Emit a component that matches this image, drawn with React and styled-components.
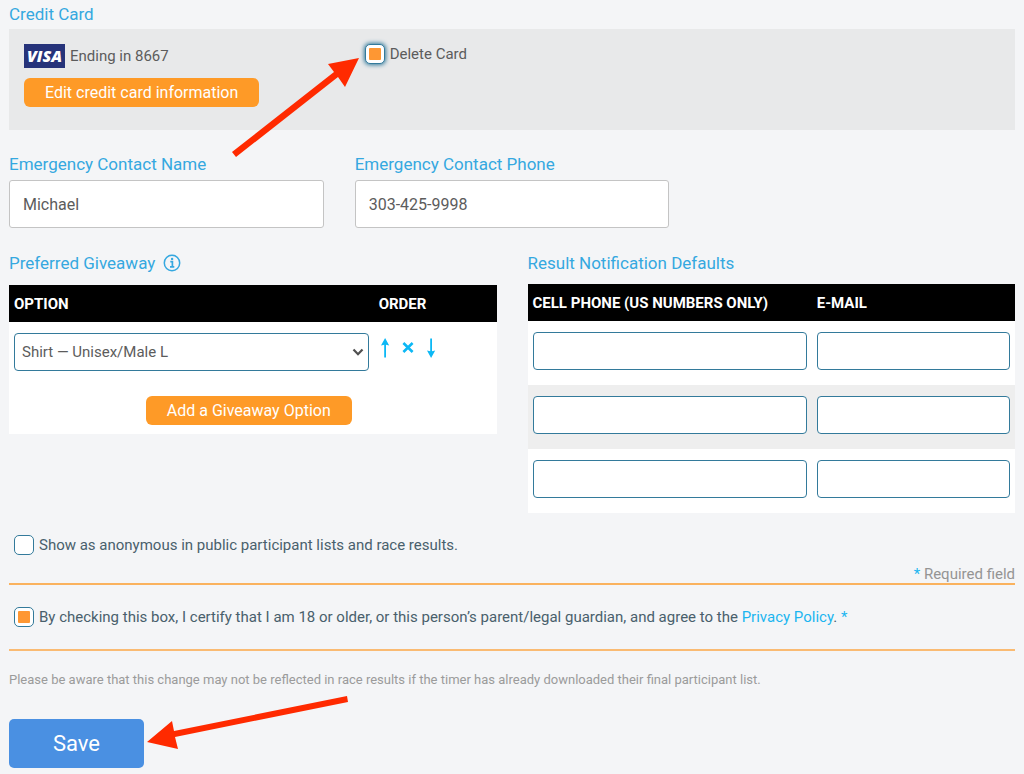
import React, { useState } from "react"
import styled, { createGlobalStyle, css } from "styled-components"

const GlobalStyle = createGlobalStyle`
    * {
        box-sizing: border-box;
    }
    body {
        margin: 0;
        background: #f4f5f7;
        font-family: Roboto, "Liberation Sans", sans-serif;
        font-size: 15px;
        line-height: 20px;
        color: #5c5c5c;
    }
    input, select, button {
        font-family: inherit;
        color: inherit;
    }
`

const Page = styled.form`
    padding: 4px 9px 6px;
`

const labelStyle = css`
    display: flex;
    align-items: center;
    gap: 8px;
    margin: 0;
    font-size: 17px;
    font-weight: 400;
    line-height: 20px;
    color: #35a8e0;
`

const Title = styled.h2`
    ${labelStyle}
    margin-bottom: ${p => p.$gap || 5}px;
`

const FieldLabel = styled.label`
    ${labelStyle}
    margin-bottom: 6px;
`

const Columns = styled.div`
    display: grid;
    grid-template-columns: repeat(${p => p.$count}, minmax(0, 1fr));
    column-gap: 31px;
    align-items: start;
    margin-top: ${p => p.$top || 0}px;
`

const CardPanel = styled.section`
    padding: 15px 15px 23px;
    background: #e8e9ea;
`

const CardLine = styled.div`
    display: flex;
    align-items: center;
    gap: 5px;
    margin-bottom: 10px;
`

const Visa = styled.span`
    width: 41px;
    height: 24px;
    background: #26337a;
    color: #fff;
    font-family: "Open Sans", sans-serif;
    font-size: 16px;
    font-weight: 800;
    font-style: italic;
    line-height: 24px;
    text-align: center;
`

const OrangeButton = styled.button`
    height: 29px;
    padding: 0 21px;
    border: 0;
    border-radius: 6px;
    background: #fe9a27;
    color: #fff;
    font-size: 16px;
    line-height: 29px;
    cursor: pointer;
`

const SaveButton = styled.button`
    width: 135px;
    height: 49px;
    border: 0;
    border-radius: 5px;
    background: #4a90e2;
    color: #fff;
    font-size: 22px;
    cursor: pointer;
`

const CheckLabel = styled.label`
    position: relative;
    display: inline-flex;
    align-items: center;
    gap: 5px;
    margin-left: 5px;
    color: ${p => p.$color || "#49606c"};
    a {
        color: #1cb5f0;
        text-decoration: none;
    }
`

const CheckBox = styled.input`
    appearance: none;
    display: grid;
    place-items: center;
    flex: none;
    width: 20px;
    height: 20px;
    margin: 0;
    border: 1px solid #337a9b;
    border-radius: 5px;
    background: #fff;
    box-shadow: ${p => (p.$glow ? "0 0 4px 1px #337a9b" : "none")};
    &:checked::before {
        content: "";
        width: 12px;
        height: 12px;
        border-radius: 1px;
        background: #fe9733;
    }
`

const TextInput = styled.input`
    display: block;
    width: 100%;
    height: 48px;
    padding: 0 13px;
    border: 1px solid #c4c4c4;
    border-radius: 3px;
    background: #fff;
    font-size: 16px;
`

const CellInput = styled.input`
    display: block;
    width: 100%;
    height: 38px;
    padding: 0 7px;
    border: 1px solid #337a9b;
    border-radius: 4px;
    background: #fff;
    font-size: 15px;
`

const SelectBox = styled.div`
    position: relative;
    select {
        appearance: none;
        display: block;
        width: 100%;
        height: 38px;
        padding: 0 24px 0 7px;
        border: 1px solid #337a9b;
        border-radius: 4px;
        background: #fff;
        font-size: 15px;
    }
    svg {
        position: absolute;
        right: 5px;
        top: 15px;
        pointer-events: none;
    }
`

const Table = styled.table`
    width: 100%;
    border-collapse: collapse;
    table-layout: fixed;
    background: #fff;
    th {
        height: 37px;
        padding: 0 5px;
        background: #000;
        color: #fff;
        font-size: 15px;
        font-weight: 700;
        text-align: left;
    }
    th:first-child {
        width: ${p => p.$first};
    }
    td {
        padding: 11px 5px 15px;
        vertical-align: top;
    }
    tbody tr:nth-child(even) td {
        background: ${p => (p.$striped ? "#eee" : "#fff")};
    }
    td.add {
        padding: 10px 13px 9px 5px;
        text-align: center;
    }
`

const OrderButtons = styled.div`
    display: flex;
    gap: 11px;
    padding-top: 4px;
    button {
        display: block;
        width: 12px;
        height: 22px;
        padding: 0;
        border: 0;
        background: none;
        color: #0cb8f5;
        cursor: pointer;
    }
    svg {
        display: block;
    }
`

const Required = styled.p`
    margin: 10px 0 0;
    font-size: 15px;
    line-height: 18px;
    text-align: right;
    color: #949494;
`

const Star = styled.span`
    color: #1cb5f0;
`

const Certify = styled.div`
    padding: 22px 0;
    border-top: 2px solid #fab25e;
    border-bottom: 2px solid #fabb73;
    line-height: 0;
    label {
        line-height: 20px;
    }
`

const Note = styled.p`
    margin: 19px 0 29px;
    font-size: 13px;
    line-height: 20px;
    color: #9b9b9b;
`

const SaveArea = styled.div`
    position: relative;
    display: flex;
`

const Pointer = styled.svg`
    position: absolute;
    left: ${p => p.$left}px;
    top: ${p => p.$top}px;
    pointer-events: none;
`

function Check({ glow, color, initial, children, pointer }) {
    const [on, setOn] = useState(!!initial)
    return (
        <CheckLabel $color={color}>
            <CheckBox type="checkbox" checked={on} onChange={e => setOn(e.target.checked)} $glow={glow} />
            <span>{children}</span>
            {pointer}
        </CheckLabel>
    )
}

function InfoIcon() {
    return (
        <svg width="18" height="18" viewBox="0 0 18 18" fill="none" stroke="#35a8e0">
            <circle cx="9" cy="9" r="7.7" strokeWidth="1.5" />
            <path d="M7.3 7.6H9.4V12.6M7 12.8H11.3" strokeWidth="1.7" />
            <circle cx="9.1" cy="4.9" r="1.2" fill="#35a8e0" stroke="none" />
        </svg>
    )
}

function ArrowIcon({ down }) {
    return (
        <svg width="12" height="22" viewBox="2 0 12 22" fill="currentColor">
            <path d={down
                ? "M7.2 1.5H9V14.2L12.2 13.4L8.1 21L4 13.4L7.2 14.2Z"
                : "M7.2 20.5H9V7.8L12.2 8.6L8.1 1L4 8.6L7.2 7.8Z"}
            />
        </svg>
    )
}

function CrossIcon() {
    return (
        <svg width="12" height="22" viewBox="2 0 12 22" stroke="currentColor" strokeWidth="2.6">
            <path d="M3.4 6L12.6 15M12.6 6L3.4 15" />
        </svg>
    )
}

export default function App() {
    const [contactName, setContactName] = useState("Michael")
    const [contactPhone, setContactPhone] = useState("303-425-9998")
    return (
        <Page onSubmit={e => e.preventDefault()}>
            <GlobalStyle />
            <Title>Credit Card</Title>
            <CardPanel>
                <Columns $count={3}>
                    <div>
                        <CardLine>
                            <Visa>VISA</Visa>
                            <span>Ending in 8667</span>
                        </CardLine>
                        <OrangeButton type="button">Edit credit card information</OrangeButton>
                    </div>
                    <Check
                        glow
                        initial
                        color="#5c5c5c"
                        pointer={
                            <Pointer $left={-135} $top={10} width="132" height="106" viewBox="0 0 132 106" fill="#ff2a00">
                                <path d="M129 4L98 10L104 18L2 98L6 103L108 23L115 33Z" />
                            </Pointer>
                        }
                    >Delete Card</Check>
                </Columns>
            </CardPanel>
            <Columns $count={3} $top={24}>
                <div>
                    <FieldLabel htmlFor="contact_name">Emergency Contact Name</FieldLabel>
                    <TextInput id="contact_name" value={contactName} onChange={e => setContactName(e.target.value)} />
                </div>
                <div>
                    <FieldLabel htmlFor="contact_phone">Emergency Contact Phone</FieldLabel>
                    <TextInput id="contact_phone" value={contactPhone} onChange={e => setContactPhone(e.target.value)} />
                </div>
            </Columns>
            <Columns $count={2} $top={25}>
                <section>
                    <Title $gap={12}>Preferred Giveaway <InfoIcon /></Title>
                    <Table $first="74.8%">
                        <thead>
                            <tr>
                                <th>OPTION</th>
                                <th>ORDER</th>
                            </tr>
                        </thead>
                        <tbody>
                            <tr>
                                <td>
                                    <SelectBox>
                                        <select aria-label="Option">
                                            <option>Shirt — Unisex/Male L</option>
                                        </select>
                                        <svg width="12" height="9" viewBox="0 0 12 9" fill="none" stroke="#505050" strokeWidth="2.2">
                                            <path d="M1.5 1.5L6 6.2L10.5 1.5" />
                                        </svg>
                                    </SelectBox>
                                </td>
                                <td>
                                    <OrderButtons>
                                        <button type="button" aria-label="Move up"><ArrowIcon /></button>
                                        <button type="button" aria-label="Remove"><CrossIcon /></button>
                                        <button type="button" aria-label="Move down"><ArrowIcon down /></button>
                                    </OrderButtons>
                                </td>
                            </tr>
                            <tr>
                                <td className="add" colSpan={2}>
                                    <OrangeButton type="button">Add a Giveaway Option</OrangeButton>
                                </td>
                            </tr>
                        </tbody>
                    </Table>
                </section>
                <section>
                    <Title $gap={11}>Result Notification Defaults</Title>
                    <Table $first="58.3%" $striped>
                        <thead>
                            <tr>
                                <th>CELL PHONE (US NUMBERS ONLY)</th>
                                <th>E-MAIL</th>
                            </tr>
                        </thead>
                        <tbody>
                            {[1, 2, 3].map(n => (
                                <tr key={n}>
                                    <td><CellInput type="tel" aria-label={`Cell phone ${n}`} /></td>
                                    <td><CellInput type="email" aria-label={`E-mail ${n}`} /></td>
                                </tr>
                            ))}
                        </tbody>
                    </Table>
                </section>
            </Columns>
            <Columns $count={1} $top={22}>
                <Check>Show as anonymous in public participant lists and race results.</Check>
            </Columns>
            <Required><Star>*</Star> Required field</Required>
            <Certify>
                <Check initial>
                    By checking this box, I certify that I am 18 or older, or this person’s parent/legal guardian, and agree to the <a href="#privacy">Privacy Policy</a>. <Star>*</Star>
                </Check>
            </Certify>
            <Note>Please be aware that this change may not be reflected in race results if the timer has already downloaded their final participant list.</Note>
            <SaveArea>
                <SaveButton type="submit">Save</SaveButton>
                <Pointer $left={136} $top={-24} width="206" height="58" viewBox="0 0 206 58" fill="#ff2a00">
                    <path d="M2 47L27 26L29 36L202 1L203 7L30 42L33 54Z" />
                </Pointer>
            </SaveArea>
        </Page>
    )
}
